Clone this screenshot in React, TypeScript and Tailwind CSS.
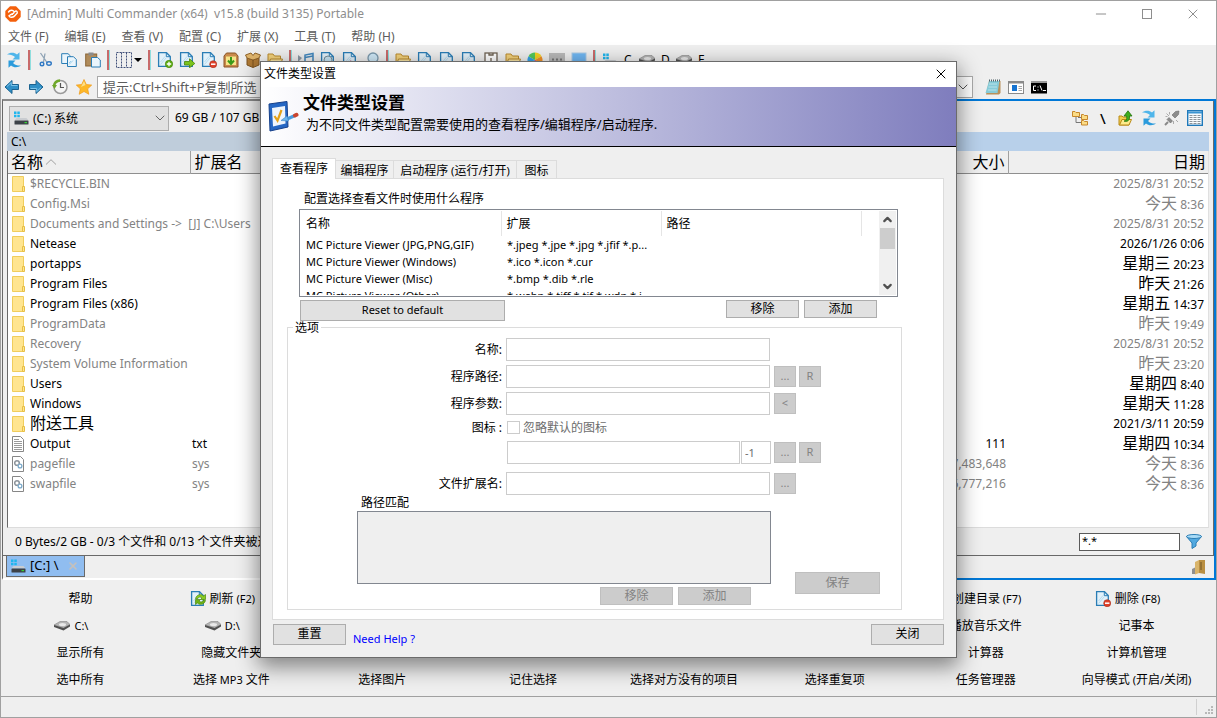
import React from 'react';
import { X, Minus, Square, ChevronDown, ChevronUp } from 'lucide-react';

interface IconProps {
  className?: string;
}

interface FileRow {
  name: string;
  kind: 'folder' | 'text' | 'system';
  ext?: string;
  size?: string;
  date: string;
  hidden?: boolean;
}

const files: FileRow[] = [
  { name: '$RECYCLE.BIN', kind: 'folder', date: '2025/8/31 20:52', hidden: true },
  { name: 'Config.Msi', kind: 'folder', date: '今天 8:36', hidden: true },
  { name: 'Documents and Settings ->\u00a0 [J] C:\\Users', kind: 'folder', date: '2025/8/31 20:52', hidden: true },
  { name: 'Netease', kind: 'folder', date: '2026/1/26 0:06' },
  { name: 'portapps', kind: 'folder', date: '星期三 20:23' },
  { name: 'Program Files', kind: 'folder', date: '昨天 21:26' },
  { name: 'Program Files (x86)', kind: 'folder', date: '星期五 14:37' },
  { name: 'ProgramData', kind: 'folder', date: '昨天 19:49', hidden: true },
  { name: 'Recovery', kind: 'folder', date: '2025/8/31 20:52', hidden: true },
  { name: 'System Volume Information', kind: 'folder', date: '昨天 23:20', hidden: true },
  { name: 'Users', kind: 'folder', date: '星期四 8:40' },
  { name: 'Windows', kind: 'folder', date: '星期天 11:28' },
  { name: '附送工具', kind: 'folder', date: '2021/3/11 20:59' },
  { name: 'Output', kind: 'text', ext: 'txt', size: '111', date: '星期四 10:34' },
  { name: 'pagefile', kind: 'system', ext: 'sys', size: '2,147,483,648', date: '今天 8:36', hidden: true },
  { name: 'swapfile', kind: 'system', ext: 'sys', size: '16,777,216', date: '今天 8:36', hidden: true },
];

const viewers = [
  { name: 'MC Picture Viewer (JPG,PNG,GIF)', ext: '*.jpeg *.jpe *.jpg *.jfif *.p...' },
  { name: 'MC Picture Viewer (Windows)', ext: '*.ico *.icon *.cur' },
  { name: 'MC Picture Viewer (Misc)', ext: '*.bmp *.dib *.rle' },
  { name: 'MC Picture Viewer (Other)', ext: '*.webp *.tiff *.tif *.wdp *.j...' },
];

const menus = ['文件 (F)', '编辑 (E)', '查看 (V)', '配置 (C)', '扩展 (X)', '工具 (T)', '帮助 (H)'];

/* Chinese and Latin runs have their own sizes in the lists */
const Mixed: React.FC<{ text: string; cjk: string; latin: string }> = ({ text, cjk, latin }) => (
  <>
    {(text.match(/[\u4e00-\u9fff]+|[^\u4e00-\u9fff]+/g) ?? []).map((part, i) => (
      <span key={i} className={/[\u4e00-\u9fff]/.test(part) ? cjk : latin}>
        {part}
      </span>
    ))}
  </>
);

/* ---------- icons ---------- */

const Svg: React.FC<{ children: React.ReactNode; className?: string }> = ({ children, className = 'size-4' }) => (
  <svg viewBox="0 0 16 16" className={`${className} shrink-0`} fill="none" aria-hidden="true">
    {children}
  </svg>
);

const RefreshIcon = () => (
  <Svg>
    <path d="M1 2.500C4 .2 8.500 .3 11 2.600L13.500 .3V7.500H6.500L9 5C7 3 4 2.200 1 2.500Z" fill="#4fb5ea" />
    <path d="M15 13.500C12 15.800 7.500 15.700 5 13.400L2.500 15.700V8.500H9.500L7 11C9 13 12 13.800 15 13.500Z" fill="#2b9bdc" />
  </Svg>
);

const CutIcon = () => (
  <Svg>
    <path d="M3.500 1L10 10.500M8 1.500L6.500 10" stroke="#8fa3b5" strokeWidth="1.300" />
    <circle cx="5" cy="12" r="1.800" stroke="#2f78c4" strokeWidth="1.400" />
    <ellipse cx="12" cy="11.500" rx="2.300" ry="1.700" stroke="#2f78c4" strokeWidth="1.400" />
  </Svg>
);

const CopyIcon = () => (
  <Svg>
    <path d="M.700 1.700H7L9.500 4V11.500H.700Z" fill="#eaf5fc" stroke="#2a7db5" />
    <path d="M6.500 4.700H12.500L15.300 7.500V14.500H6.500Z" fill="#eaf5fc" stroke="#2a7db5" />
    <path d="M8 11L10 9M8 12.500L12 8.500" stroke="#9fd0ec" />
  </Svg>
);

const PasteIcon = () => (
  <Svg>
    <rect x=".7" y="2" width="11" height="12" fill="#b08b5a" stroke="#8a6536" />
    <rect x="3.500" y=".5" width="5" height="3" fill="#8c8c8c" />
    <path d="M6.500 5.500H12.500L15.300 8V15H6.500Z" fill="#eaf5fc" stroke="#2a7db5" />
  </Svg>
);

const SelectIcon = () => (
  <Svg>
    <path d="M.5 .5H15.500V15.500H.5ZM5.500 .5V15.500M10.500 .5V15.500" stroke="#3f4f78" strokeDasharray="2 1" />
  </Svg>
);

type Badge = 'plus' | 'minus' | 'arrow' | 'refresh' | 'pen' | 'lens' | 'none';

const SheetIcon: React.FC<{ badge: Badge }> = ({ badge }) => (
  <Svg>
    <path d="M1.600 .700H9.500L13.300 4.500V14.300H1.600Z" fill="#e2f1fa" stroke="#2a7db5" strokeWidth="1.300" />
    <path d="M9.300 .900V4.700H13" stroke="#2a7db5" />
    <path d="M3.500 10L8 4.500M3.500 12.500L9 6" stroke="#b8dcf0" />
    {badge === 'plus' && (
      <>
        <circle cx="12" cy="12" r="3.700" fill="#5fae12" stroke="#3f7d0a" strokeWidth=".6" />
        <path d="M12 9.800V14.200M9.800 12H14.200" stroke="#fff" strokeWidth="1.300" />
      </>
    )}
    {badge === 'minus' && (
      <>
        <circle cx="12.200" cy="12.200" r="3.500" fill="#e0412a" stroke="#a32a1a" strokeWidth=".6" />
        <path d="M10 12.200H14.400" stroke="#fff" strokeWidth="1.500" />
      </>
    )}
    {badge === 'arrow' && <path d="M5.500 9.500H10.500V6.800L15.800 11.500L10.500 15.800V13H5.500Z" fill="#7bc41c" stroke="#47830a" strokeWidth=".8" />}
    {badge === 'refresh' && (
      <>
        <path d="M5.500 7.500C6.500 3.500 11.500 2.500 13.500 5L15.500 3.500V8.500H10.500L12 7C10.500 5.500 8.500 6 7.800 7.500Z" fill="#8acb22" stroke="#4c8a0c" strokeWidth=".7" />
        <path d="M15.500 9.500C14.500 13.500 9.500 14.500 7.500 12L5.500 13.500V8.500H10.500L9 10C10.500 11.500 12.500 11 13.200 9.500Z" fill="#6fb316" stroke="#4c8a0c" strokeWidth=".7" />
      </>
    )}
    {badge === 'pen' && <path d="M8 9L14 14" stroke="#b05a8c" strokeWidth="2" />}
    {badge === 'lens' && <circle cx="8" cy="8" r="4" fill="#c7e6f6" stroke="#78909c" />}
  </Svg>
);

const PackIcon = () => (
  <Svg>
    <path d="M1 4L3.500 1H12.500L15 4V15H1Z" fill="#c98a4b" stroke="#8a5526" />
    <rect x="3" y="4.500" width="10" height="8.500" fill="#f6e58a" />
    <path d="M8 5V11M5 8.500L8 12L11 8.500" stroke="#3a9a18" strokeWidth="2" />
  </Svg>
);

const BoxIcon = () => (
  <Svg>
    <path d="M2 6L8 8L14 6V13L8 15.500L2 13Z" fill="#b07a35" stroke="#7d5320" />
    <path d="M2 6L.5 3L6 1L8 3.500L10 1L15.500 3L14 6L8 8Z" fill="#e0b56c" stroke="#8f6329" />
    <path d="M8 8V15" stroke="#7d5320" />
  </Svg>
);

const OpenFolderIcon = () => (
  <Svg>
    <path d="M1 2H6L7.500 4H13.500V13H1Z" fill="#f3d27c" stroke="#b98a2f" />
    <path d="M3.500 7H15.500L13 14H1Z" fill="#fbe6a4" stroke="#b98a2f" />
  </Svg>
);

const MusicIcon = () => (
  <Svg>
    <path d="M0 3L4 6L0 10Z" fill="#8d99a5" />
    <path d="M7 13V3L15 1.500V12" stroke="#4287bd" strokeWidth="1.500" />
    <path d="M7 5.500L15 4" stroke="#4287bd" strokeWidth="1.500" />
  </Svg>
);

const LensIcon = () => (
  <Svg>
    <circle cx="9" cy="6" r="5" fill="#cfe9f8" stroke="#7b99ad" strokeWidth="1.300" />
    <path d="M5 10L1 15" stroke="#8a6536" strokeWidth="2" />
  </Svg>
);

const ClipboardIcon = () => (
  <Svg>
    <rect x="2" y="1" width="12" height="14" fill="#fff" stroke="#6e6253" strokeWidth="1.300" />
    <path d="M6 1V3H10V1M8 6V10" stroke="#6e6253" strokeWidth="1.300" />
  </Svg>
);

const ColorWheelIcon = () => (
  <Svg>
    <path d="M8 8V.5A7.500 7.500 0 0 1 14.500 4.250Z" fill="#f6d323" />
    <path d="M8 8L14.500 4.250A7.500 7.500 0 0 1 14.500 11.750Z" fill="#f39227" />
    <path d="M8 8L14.500 11.750A7.500 7.500 0 0 1 8 15.500Z" fill="#e23c4e" />
    <path d="M8 8V15.500A7.500 7.500 0 0 1 1.500 11.750Z" fill="#8a4bd0" />
    <path d="M8 8L1.500 11.750A7.500 7.500 0 0 1 1.500 4.250Z" fill="#35a3e8" />
    <path d="M8 8L1.500 4.250A7.500 7.500 0 0 1 8 .5Z" fill="#54c95b" />
  </Svg>
);

const KeyboardIcon = () => (
  <Svg>
    <rect y="1" width="16" height="14" fill="#b9b9b9" />
    <path d="M3 7.500H5M7 7.500H9M11 7.500H13" stroke="#777" strokeWidth="2" />
  </Svg>
);

const ScreenIcon = () => (
  <Svg>
    <rect x="1" y="1" width="14" height="13" fill="#6fb6f2" stroke="#a9c9e5" />
  </Svg>
);

const ArrowIcon: React.FC<IconProps> = ({ className = 'size-4' }) => (
  <Svg className={className}>
    <path d="M1 8L8 1.500V5.500H14.500V10.500H8V14.500Z" fill="#2f8fc6" stroke="#1b628f" />
    <path d="M3 7.500L7.300 3.500V6.500H13.500" stroke="#7cc4ea" />
  </Svg>
);

const HistoryIcon = () => (
  <Svg>
    <circle cx="8.500" cy="8" r="6.500" fill="#f4f4f4" stroke="#9a9a9a" strokeWidth="1.500" />
    <path d="M8.500 4V8.500H12" stroke="#555" strokeWidth="1.200" />
    <path d="M2 7A6.500 6.500 0 0 1 8 1.500" stroke="#6ea72a" strokeWidth="2.500" />
    <path d="M0 6H5L2.500 10Z" fill="#6ea72a" />
  </Svg>
);

const StarIcon = () => (
  <Svg>
    <path d="M8 .5L10.300 5.500L15.700 6.100L11.700 9.800L12.800 15.300L8 12.500L3.200 15.300L4.300 9.800L.3 6.100L5.700 5.500Z" fill="#fdb827" stroke="#ef9a1a" strokeWidth=".7" />
    <path d="M8 2L9.500 6L5 8Z" fill="#fde08a" />
  </Svg>
);

const DriveIcon = () => (
  <Svg>
    <path d="M1 1.500H3.500V4H1ZM4.300 1.500H6.800V4H4.300ZM1 4.800H3.500V7.300H1ZM4.300 4.800H6.800V7.300H4.300Z" fill="#1fb6ee" />
    <path d="M3.500 8H13.500L15.500 10.500H1.500Z" fill="#c9ccd0" />
    <rect x="1.500" y="10.500" width="14" height="4" rx=".5" fill="#3d4248" />
    <rect x="11.500" y="12" width="2.500" height="1.200" fill="#35d435" />
  </Svg>
);

const DiskIcon = () => (
  <Svg>
    <path d="M0 7L6 3.500H13L16 6.500L9.500 10Z" fill="#b5b5b5" stroke="#858585" strokeWidth=".6" />
    <path d="M0 7L9.500 10L16 6.500V8.500L9.500 12.500L0 9Z" fill="#505050" />
    <ellipse cx="8.500" cy="6.500" rx="3.500" ry="1.500" fill="#e9e9e9" />
  </Svg>
);

const FolderIcon = () => (
  <Svg>
    <path d="M1.500 .5H12.500V15.500H1.500Z" fill="#ffe590" stroke="#f0cd5c" />
    <path d="M11.500 10.500H13.500V15.500H11.500Z" fill="#ffe590" stroke="#e7bf45" />
  </Svg>
);

const TextFileIcon = () => (
  <Svg>
    <path d="M1.500 .5H9.500L12.500 3.500V15.500H1.500Z" fill="#fff" stroke="#868686" />
    <path d="M3 3.500H8M3 5.500H11M3 7.500H11M3 9.500H11M3 11.500H11M3 13.500H11" stroke="#9a9a9a" />
  </Svg>
);

const SystemFileIcon = () => (
  <Svg>
    <path d="M1.500 .5H9.500L12.500 3.500V15.500H1.500Z" fill="#fff" stroke="#868686" />
    <circle cx="6" cy="7" r="2.300" stroke="#8d949b" strokeWidth="1.500" />
    <circle cx="9" cy="10" r="1.900" fill="#fff" stroke="#7ba9c9" strokeWidth="1.300" />
  </Svg>
);

const NotepadIcon = () => (
  <Svg>
    <path d="M4 2H15.500V14L14 15.500H1Z" fill="#b9905a" />
    <path d="M4 2H14.500L12.500 14H.5Z" fill="#86cbd8" />
    <path d="M4 5H12M3.500 8H12M3 11H11.500" stroke="#b9e3ea" />
    <path d="M4 1.500H15" stroke="#53656b" strokeWidth="2" strokeDasharray="1 1" />
  </Svg>
);

const PreviewIcon = () => (
  <Svg>
    <rect x=".5" y="2.500" width="15" height="12" fill="#fff" stroke="#8a8a8a" />
    <path d="M0 3.500H16" stroke="#8a8a8a" strokeWidth="2" />
    <rect x="4" y="6" width="5" height="6" fill="#1674d1" />
    <path d="M10.500 7.500H14M10.500 9.500H14M10.500 11.500H14" stroke="#a5a5a5" />
  </Svg>
);

const ConsoleIcon = () => (
  <Svg>
    <rect y="2" width="16" height="12.500" fill="#000" />
    <path d="M0 3H16" stroke="#9a9a9a" strokeWidth="2" />
    <path d="M5 7H2.500V11.500H5M7 7.500V8.500M7 10.500V11.500M9 6.500L11 11.500M12 11.500H15" stroke="#fff" />
  </Svg>
);

const TreeIcon = () => (
  <Svg>
    <path d="M4 5V12.500H10M6 7.500H10" stroke="#777" />
    <path d="M.5 1.500H3L4 2.500H7.500V6.500H.5Z M9.500 4.500H11.500L12.500 5.500H15.500V9.500H9.500Z M9.500 10.500H11.500L12.500 11.500H15.500V15H9.500Z" fill="#fbdc85" stroke="#c6872c" />
  </Svg>
);

const FolderUpIcon = () => (
  <Svg>
    <path d="M1 6H4L5 7H11V15H1Z" fill="#f3cf50" stroke="#b98a16" />
    <path d="M4 9.500H13.500L11 15H1.500Z" fill="#fdeb8d" stroke="#b98a16" />
    <path d="M6 11C9 11 9 8 8.500 6H6L10 .8L14 6H11.500C12 9.500 10 12.500 6 11Z" fill="#3fae1d" stroke="#23720c" strokeWidth=".8" />
  </Svg>
);

const PlugIcon = () => (
  <Svg>
    <path d="M1 15L4 12" stroke="#888" strokeWidth="2" />
    <path d="M3 9.500L6.500 13L8.500 11L5 7.500ZM8 5L11 8L14.500 4.500L15 1L11.500 1.500Z" fill="#8c8c8c" stroke="#6b6b6b" strokeWidth=".6" />
    <path d="M2.500 3.500L5 6M5.500 2V4.500M1.500 6.500H3.500M12 10L14 12M9.500 11V14" stroke="#aaa" />
  </Svg>
);

const GridViewIcon = () => (
  <Svg>
    <rect x=".7" y=".7" width="14.600" height="14.600" fill="#f7fbfe" stroke="#1f79ba" strokeWidth="1.400" />
    <path d="M1 2.500H15" stroke="#3a94d2" strokeWidth="2" />
    <path d="M2.500 5.500H13.500M2.500 7.500H13.500M2.500 9.500H13.500M2.500 11.500H13.500M2.500 13.500H13.500" stroke="#8b9299" strokeDasharray="3 1" />
  </Svg>
);

const FunnelIcon = () => (
  <Svg>
    <path d="M.5 2.500L6 9V14.500L10 12V9L15.500 2.500Z" fill="#52a9e0" stroke="#2b7db4" />
    <ellipse cx="8" cy="2.500" rx="7.500" ry="2" fill="#a9dbf6" stroke="#2b7db4" />
  </Svg>
);

const FolderTabIcon = () => (
  <Svg>
    <path d="M1 10L5 8V15H1Z" fill="#8f8f8f" />
    <path d="M4 3L8 1V14L4 15.500Z" fill="#d9b46a" />
    <path d="M8 1H14V15L8 14Z" fill="#b98f42" />
    <path d="M10 3V11" stroke="#6e5424" />
  </Svg>
);

const LogoIcon = () => (
  <Svg>
    <path d="M5 .3H11L15.700 5V11L11 15.700H5L.3 11V5Z" fill="#f4600c" />
    <path d="M3.500 6C5 3.800 8 3.800 9 5.500C9.500 7 8 8 6.500 8.300M4 10C5 12 8.500 11.500 10 9.500L12.300 7C12.500 5 11 4.500 10 5.500" stroke="#fff" strokeWidth="1.400" strokeLinecap="round" />
    <path d="M4 10C5 8.500 6.500 8.300 8 8.300" stroke="#fff" strokeWidth="1.400" />
  </Svg>
);

const SettingsIcon = () => (
  <svg viewBox="0 0 32 32" className="size-8 shrink-0" fill="none" aria-hidden="true">
    <path d="M2 4L20 1.500L21 27L3 31Z" fill="#2567c4" stroke="#16408a" />
    <path d="M5 8L18 6L18.500 23.500L6 26.500Z" fill="#eef5fd" />
    <path d="M7.500 16L10.500 20.500L14.500 10" stroke="#e3a21a" strokeWidth="2.200" />
    <path d="M19 19.500L28 15.500" stroke="#4a9ada" strokeWidth="3.500" />
    <path d="M14 20.500L20 16L21.500 21Z" fill="#6cb6ee" stroke="#3a87c9" strokeWidth=".6" />
    <path d="M28 15.500L29.500 14.800" stroke="#c9452e" strokeWidth="4" strokeLinecap="round" />
  </svg>
);

const Separator = () => <span className="h-5 w-[3px] shrink-0 border-l-2 border-[#c86a6a] bg-[#8fdede]" />;

/* ---------- main window ---------- */

const TitleBar = () => (
  <header className="flex h-[25px] items-center bg-white pl-1 text-[#8e8e8e]">
    <LogoIcon />
    <h1 className="ml-[6px] flex-1 text-[12px] whitespace-pre">[Admin] Multi Commander (x64)  v15.8 (build 3135) Portable</h1>
    <button type="button" aria-label="最小化" className="flex w-[46px] justify-center">
      <Minus className="size-4" strokeWidth={1.5} />
    </button>
    <button type="button" aria-label="最大化" className="flex w-[46px] justify-center">
      <span className="size-[10px] border border-[#8e8e8e]" />
    </button>
    <button type="button" aria-label="关闭窗口" className="flex w-[46px] justify-center">
      <X className="size-4" strokeWidth={1.5} />
    </button>
  </header>
);

const Toolbar = () => (
  <div className="flex h-[29px] items-center gap-[6px] pl-[5px]">
    <RefreshIcon />
    <Separator />
    <div className="flex gap-2">
      <CutIcon />
      <CopyIcon />
      <PasteIcon />
    </div>
    <Separator />
    <SelectIcon />
    <span className="-ml-1 size-0 border-x-4 border-t-4 border-x-transparent border-t-black" />
    <Separator />
    <SheetIcon badge="plus" />
    <SheetIcon badge="arrow" />
    <SheetIcon badge="minus" />
    <PackIcon />
    <BoxIcon />
    <OpenFolderIcon />
    <Separator />
    <MusicIcon />
    <SheetIcon badge="lens" />
    <SheetIcon badge="pen" />
    <LensIcon />
    <Separator />
    <OpenFolderIcon />
    <SheetIcon badge="none" />
    <SheetIcon badge="none" />
    <SheetIcon badge="none" />
    <ClipboardIcon />
    <OpenFolderIcon />
    <ColorWheelIcon />
    <KeyboardIcon />
    <ScreenIcon />
    <Separator />
    <DriveIcon />
    <span className="w-[9px] text-[12px]">C</span>
    <DiskIcon />
    <span className="w-[9px] text-[12px]">D</span>
    <DiskIcon />
    <span className="w-[9px] text-[12px]">E</span>
  </div>
);

const CommandBar = () => (
  <div className="flex h-[25px] items-center gap-[5px] pl-[3px]">
    <div className="flex items-center gap-2">
      <ArrowIcon />
      <ArrowIcon className="size-4 rotate-180" />
      <HistoryIcon />
      <StarIcon />
    </div>
    <div className="flex h-[22px] flex-1 items-center border border-[#a9a9a9] bg-white">
      <input
        type="text"
        aria-label="命令"
        placeholder="提示:Ctrl+Shift+P复制所选"
        className="h-full min-w-0 flex-1 px-[5px] text-[13px] outline-none placeholder:text-[#5c5c5c]"
      />
      <ChevronDown className="mr-px size-4 text-[#555]" strokeWidth={1.5} />
    </div>
    <div className="flex w-[238px] items-center gap-[7px] pl-[7px]">
      <NotepadIcon />
      <PreviewIcon />
      <ConsoleIcon />
    </div>
  </div>
);

const fileIcons = {
  folder: <FolderIcon />,
  text: <TextFileIcon />,
  system: <SystemFileIcon />,
};

const FileTable = () => (
  <table className="w-full table-fixed border-collapse text-[12px] leading-[18px] whitespace-nowrap">
    <colgroup>
      <col className="w-[182px]" />
      <col />
      <col className="w-[150px]" />
      <col className="w-[200px]" />
    </colgroup>
    <thead>
      <tr className="h-[22px] border-b border-[#8f8f8f] bg-[#efefef] text-[16px] leading-[20px]">
        <th className="border-r border-[#a0a0a0] pl-[3px] text-left font-normal">
          <span className="flex items-center gap-[2px]">
            名称
            <svg viewBox="0 0 12 6" className="h-[6px] w-3" fill="none" stroke="#a0a0a0" aria-hidden="true">
              <path d="M1 5.500L6 .7L11 5.500" />
            </svg>
          </span>
        </th>
        <th className="pl-1 text-left font-normal">扩展名</th>
        <th className="border-r border-[#a0a0a0] pr-[3px] text-right font-normal">大小</th>
        <th className="pr-[3px] text-right font-normal">日期</th>
      </tr>
    </thead>
    <tbody>
      {files.map((f) => (
        <tr key={f.name} className={f.hidden ? 'h-5 text-[#838383]' : 'h-5 text-black'}>
          <td className="pl-[3px]">
            <div className="flex h-5 items-center gap-[3px]">
              {fileIcons[f.kind]}
              <span>
                <Mixed text={f.name} cjk="text-[16px]" latin="text-[12px]" />
              </span>
            </div>
          </td>
          <td className="pl-[2px]">{f.ext}</td>
          <td className="pr-[2px] text-right">{f.size}</td>
          <td className="pr-1">
            <div className="flex h-5 items-center justify-end">
              <span>
                <Mixed text={f.date} cjk="text-[16px]" latin="text-[12px]" />
              </span>
            </div>
          </td>
        </tr>
      ))}
    </tbody>
  </table>
);

const FilePanel: React.FC<{ active?: boolean }> = ({ active }) => (
  <section
    className={
      active
        ? 'flex min-w-0 flex-1 flex-col border-2 border-[#0078d7]'
        : 'flex min-w-0 flex-1 flex-col border-t-2 border-b-2 border-l border-t-[#8a8a8a] border-b-white border-l-[#696969]'
    }
  >
    <div className={active ? 'flex flex-1 flex-col border-r border-b border-[#696969] pr-1 pl-1' : 'flex flex-1 flex-col border-b border-[#696969] pl-1'}>
      <div className="flex h-[31px] items-end gap-[6px] pl-[2px] text-[13px]">
        <div className="relative mb-px w-[160px]">
          <span className="pointer-events-none absolute top-1 left-1">
            <DriveIcon />
          </span>
          <select aria-label="驱动器" className="h-[25px] w-full appearance-none border border-[#adadad] bg-[#e1e1e1] pl-[23px] text-[12px]">
            <option>(C:) 系统</option>
          </select>
          <ChevronDown className="pointer-events-none absolute top-1 right-px size-4 text-[#444]" strokeWidth={1.2} />
        </div>
        <span className="flex-1 pb-[5px] text-[12px] whitespace-nowrap">69 GB / 107 GB 可用</span>
        {active && (
          <div className="mr-[6px] flex items-center gap-[7px] pb-[6px]">
            <TreeIcon />
            <span className="w-4 text-center text-[15px] leading-4 font-medium">\</span>
            <FolderUpIcon />
            <RefreshIcon />
            <PlugIcon />
            <GridViewIcon />
          </div>
        )}
      </div>
      <div className={active ? 'h-[19px] bg-[#b8d0ea] pl-1 text-[12px] leading-[19px]' : 'h-[19px] bg-[#bfcddb] pl-1 text-[12px] leading-[19px]'}>C:\</div>
      <div className="flex-1 overflow-hidden border-r border-b border-l border-r-[#e0e0e0] border-b-[#dcdcdc] border-l-[#696969] bg-white">
        <FileTable />
      </div>
      <div className="flex h-[27px] items-center pl-2 text-[12px]">
        <span className="flex-1 whitespace-nowrap">0 Bytes/2 GB - 0/3 个文件和 0/13 个文件夹被选中</span>
        {active && (
          <div className="mr-[7px] flex items-center gap-[6px]">
            <input type="text" aria-label="过滤" defaultValue="*.*" className="h-[18px] w-[101px] border border-[#5a5a5a] bg-white px-[2px] pb-[2px] text-[11px] leading-[14px] outline-none" />
            <FunnelIcon />
          </div>
        )}
      </div>
    </div>
    <div className="flex h-[22px] items-start pl-[3px]">
      {active ? (
        <span className="mt-[3px] mr-[7px] ml-auto">
          <FolderTabIcon />
        </span>
      ) : (
        <button type="button" className="flex h-[21px] w-[79px] items-center border border-t-0 border-[#696969] bg-[#90bdf0] pl-[3px] text-left text-[13px]">
          <DriveIcon />
          <span className="ml-1 flex-1 whitespace-nowrap">[C:] \</span>
          <X className="mr-[5px] size-3 shrink-0 text-[#c8c0b8]" strokeWidth={3} />
        </button>
      )}
    </div>
  </section>
);

interface Action {
  label?: string;
  icon?: React.ReactNode;
}

/* the slots that carry no label are empty buttons */
const actions: Action[] = [
  { label: '帮助' },
  { label: '刷新 (F2)', icon: <SheetIcon badge="refresh" /> },
  {},
  {},
  {},
  {},
  { label: '创建目录 (F7)', icon: <OpenFolderIcon /> },
  { label: '删除 (F8)', icon: <SheetIcon badge="minus" /> },
  { label: 'C:\\', icon: <DiskIcon /> },
  { label: 'D:\\', icon: <DiskIcon /> },
  {},
  {},
  {},
  {},
  { label: '播放音乐文件' },
  { label: '记事本' },
  { label: '显示所有' },
  { label: '隐藏文件夹' },
  { label: '隐藏可执行文件' },
  { label: '隐藏 DLL 文件' },
  { label: '切换选中' },
  {},
  { label: '计算器' },
  { label: '计算机管理' },
  { label: '选中所有' },
  { label: '选择 MP3 文件' },
  { label: '选择图片' },
  { label: '记住选择' },
  { label: '选择对方没有的项目' },
  { label: '选择重复项' },
  { label: '任务管理器' },
  { label: '向导模式 (开启/关闭)' },
];

const ActionGrid = () => (
  <div className="grid grid-cols-8 px-1 pt-1 pb-[3px]">
    {actions.map((a, i) => (
      <button
        key={i}
        type="button"
        className={a.icon ? 'flex h-[27px] items-center justify-center gap-1 pr-[18px] whitespace-nowrap' : 'flex h-[27px] items-center justify-center whitespace-nowrap'}
      >
        {a.icon}
        <span>
          <Mixed text={a.label ?? ''} cjk="text-[12px]" latin="text-[11px]" />
        </span>
      </button>
    ))}
  </div>
);

/* ---------- dialog ---------- */

const inputClass = 'h-[23px] border border-[#cccccc] bg-white px-[3px] outline-none';
const smallButton = 'h-[21px] w-[22px] border border-[#bfbfbf] bg-[#cccccc] text-[11px] text-[#838383]';
const normalButton = 'border border-[#adadad] bg-[#e1e1e1]';
const disabledButton = 'border border-[#bfbfbf] bg-[#cccccc] text-[#838383]';
const labelClass = 'w-[214px] text-right leading-[23px]';
const tabClass = 'h-[18px] border-t border-r border-[#dcdcdc] pt-[2px] leading-4';

const ViewerList = () => (
  <div className="mr-[45px] ml-[26px] flex h-[88px] border border-[#828790] p-px">
    <div className="min-w-0 flex-1 overflow-hidden">
      <table className="w-full table-fixed border-collapse text-left whitespace-nowrap">
        <colgroup>
          <col className="w-[200px]" />
          <col className="w-[160px]" />
          <col className="w-[200px]" />
          <col />
        </colgroup>
        <thead>
          <tr className="h-[25px] text-[12px]">
            <th className="border-r border-[#e5e5e5] pt-[2px] pl-[5px] font-normal">名称</th>
            <th className="border-r border-[#e5e5e5] pt-[2px] pl-[5px] font-normal">扩展</th>
            <th className="border-r border-[#e5e5e5] pt-[2px] pl-[5px] font-normal">路径</th>
            <th />
          </tr>
        </thead>
        <tbody>
          {viewers.map((v) => (
            <tr key={v.name} className="h-[17px] text-[11px] leading-[17px]">
              <td className="pl-[5px]">{v.name}</td>
              <td className="pl-[6px]">{v.ext}</td>
              <td />
              <td />
            </tr>
          ))}
        </tbody>
      </table>
    </div>
    <div className="flex w-[17px] flex-col items-center bg-[#f0f0f0]">
      <ChevronUp className="size-[17px] p-[2px] text-[#505050]" strokeWidth={4} />
      <span className="h-[21px] w-[15px] bg-[#cdcdcd]" />
      <ChevronDown className="mt-auto size-[17px] p-[2px] text-[#505050]" strokeWidth={4} />
    </div>
  </div>
);

const OptionsGroup = () => (
  <fieldset className="mr-[41px] ml-[14px] border border-[#dcdcdc] pb-1">
    <legend className="ml-[5px] px-[2px] leading-4">选项</legend>
    <div className="flex flex-col gap-1 pt-[2px]">
      <div className="flex items-center gap-1">
        <label htmlFor="opt-name" className={labelClass}>名称:</label>
        <input id="opt-name" disabled className={`${inputClass} w-[264px]`} />
      </div>
      <div className="flex items-center gap-1">
        <label htmlFor="opt-path" className={labelClass}>程序路径:</label>
        <input id="opt-path" disabled className={`${inputClass} w-[264px]`} />
        <div className="flex gap-[3px]">
          <button type="button" disabled className={smallButton}>...</button>
          <button type="button" disabled className={smallButton}>R</button>
        </div>
      </div>
      <div className="flex items-center gap-1">
        <label htmlFor="opt-args" className={labelClass}>程序参数:</label>
        <input id="opt-args" disabled className={`${inputClass} w-[264px]`} />
        <button type="button" disabled className={smallButton}>&lt;</button>
      </div>
      <div className="flex h-[18px] items-center gap-1">
        <span className="w-[214px] text-right">图标 :</span>
        <label className="flex items-center gap-[3px] pl-px text-[#6d6d6d]">
          <input type="checkbox" disabled className="size-[13px] appearance-none border border-[#cccccc] bg-white" />
          忽略默认的图标
        </label>
      </div>
      <div className="flex items-center gap-[3px] pl-[219px]">
        <div className="flex gap-px">
          <input aria-label="图标路径" disabled className={`${inputClass} w-[233px]`} />
          <input aria-label="图标索引" disabled defaultValue="-1" className={`${inputClass} w-[30px] text-[11px] text-[#6d6d6d]`} />
        </div>
        <div className="flex gap-[3px]">
          <button type="button" disabled className={smallButton}>...</button>
          <button type="button" disabled className={smallButton}>R</button>
        </div>
      </div>
      <div className="mt-1 flex items-center gap-1">
        <label htmlFor="opt-ext" className={labelClass}>文件扩展名:</label>
        <input id="opt-ext" disabled className={`${inputClass} w-[264px]`} />
        <button type="button" disabled className={smallButton}>...</button>
      </div>
    </div>
    <div className="flex items-end gap-6 pl-[69px]">
      <div className="w-[414px]">
        <p className="pl-1 leading-4">路径匹配</p>
        <div className="h-[73px] border border-[#828790] bg-[#efefef]" />
        <div className="mt-[3px] flex justify-end gap-[5px] pr-5">
          <button type="button" disabled className={`${disabledButton} h-[18px] w-[73px] leading-4`}>移除</button>
          <button type="button" disabled className={`${disabledButton} h-[18px] w-[73px] leading-4`}>添加</button>
        </div>
      </div>
      <button type="button" disabled className={`${disabledButton} mb-[11px] h-[22px] w-[85px]`}>保存</button>
    </div>
  </fieldset>
);

const FileTypeDialog = () => (
  <div className="absolute inset-0 flex items-center justify-center">
    <div
      role="dialog"
      aria-label="文件类型设置"
      className="w-[697px] max-w-full border border-[#6b6b6b] bg-[#efefef] text-[12px] text-black shadow-[0_7px_20px_2px_rgba(0,0,0,0.45)]"
    >
      <div className="flex h-[25px] items-center justify-between bg-white pr-[7px] pl-[3px]">
        <span>文件类型设置</span>
        <button type="button" aria-label="关闭对话框">
          <X className="size-4" strokeWidth={1.5} />
        </button>
      </div>
      <div className="flex h-[60px] items-center border-b border-black bg-linear-to-r from-white via-[#bfbfdf] to-[#7f7dbd] pl-[6px]">
        <SettingsIcon />
        <div className="ml-1 pb-[7px]">
          <h2 className="text-[17px] leading-[22px] font-bold">文件类型设置</h2>
          <p className="pl-[3px] text-[13px] leading-5">为不同文件类型配置需要使用的查看程序/编辑程序/启动程序.</p>
        </div>
      </div>
      <div className="pt-[11px] pr-3 pb-3 pl-[11px]">
        <div role="tablist" className="relative flex items-end">
          <button type="button" role="tab" aria-selected="true" className="z-10 -mb-px h-[21px] w-16 border border-b-0 border-[#dcdcdc] bg-white leading-4">
            查看程序
          </button>
          <button type="button" role="tab" className={`${tabClass} w-[58px]`}>编辑程序</button>
          <button type="button" role="tab" className={`${tabClass} w-[123px]`}>
            <Mixed text="启动程序 (运行/打开)" cjk="text-[12px]" latin="text-[11px]" />
          </button>
          <button type="button" role="tab" className={`${tabClass} w-[40px]`}>图标</button>
        </div>
        <div className="border border-[#dcdcdc] bg-white pt-3 pb-[9px]">
          <p className="mb-[2px] pl-[31px] leading-4">配置选择查看文件时使用什么程序</p>
          <ViewerList />
          <div className="mt-[3px] mr-[66px] mb-[-2px] ml-[27px] flex h-[22px] items-start gap-[5px]">
            <button type="button" className={`${normalButton} mr-auto h-[21px] w-[205px] text-[11px]`}>Reset to default</button>
            <button type="button" className={`${normalButton} h-[18px] w-[73px] leading-4`}>移除</button>
            <button type="button" className={`${normalButton} h-[18px] w-[73px] leading-4`}>添加</button>
          </div>
          <OptionsGroup />
        </div>
        <div className="mt-1 flex items-end gap-[7px] pl-px">
          <button type="button" className={`${normalButton} h-[21px] w-[73px]`}>重置</button>
          <a href="#help" className="mr-auto text-[11px] leading-[13px] text-[#0000ff]">Need Help ?</a>
          <button type="button" className={`${normalButton} h-[21px] w-[73px]`}>关闭</button>
        </div>
      </div>
    </div>
  </div>
);

const App = () => (
  <div className='relative flex min-h-screen flex-col overflow-hidden border border-[#a0a0a0] bg-[#efefef] font-["Noto_Sans","Noto_Sans_CJK_SC",sans-serif] text-[12px] text-black'>
    <TitleBar />
    <nav className="flex h-[19px] items-center gap-4 bg-white pt-[2px] pl-[7px] text-[12px] text-[#5c5c5c]">
      {menus.map((m) => (
        <button key={m} type="button" className="whitespace-nowrap">{m}</button>
      ))}
    </nav>
    <Toolbar />
    <CommandBar />
    <main className="flex flex-1 gap-1 pb-px pl-px">
      <FilePanel />
      <FilePanel active />
    </main>
    <ActionGrid />
    <footer className="flex h-[21px] items-end justify-end border-t border-[#a0a0a0] pr-[2px] pb-[2px]">
      <span className="mr-2 h-4 border-l border-[#d0d0d0]" />
      <svg viewBox="0 0 9 9" className="size-[9px]" fill="#b8b8b8" aria-hidden="true">
        <path d="M6 0H8V2H6ZM3 3H5V5H3ZM6 3H8V5H6ZM0 6H2V8H0ZM3 6H5V8H3ZM6 6H8V8H6Z" />
      </svg>
    </footer>
    <FileTypeDialog />
  </div>
);

export default App;
